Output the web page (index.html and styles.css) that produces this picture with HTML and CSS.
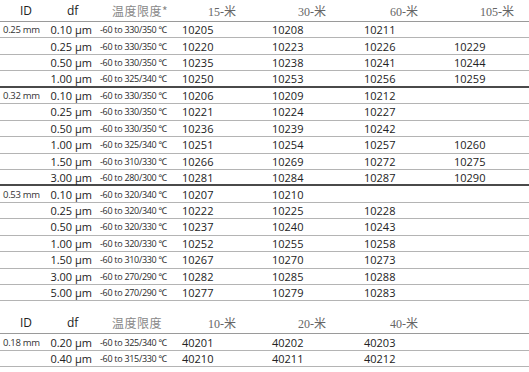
FILE: index.html
```html
<!DOCTYPE html>
<html lang="zh">
<head>
<meta charset="utf-8">
<meta name="viewport" content="width=device-width, initial-scale=1.0">
<title>色谱柱订货号</title>
<link rel="stylesheet" href="styles.css">
</head>
<body>

<!-- main table: 0.25 / 0.32 / 0.53 mm columns -->
<div class="grid">
  <div class="row head">
    <div class="id">ID</div>
    <div class="df">df</div>
    <div class="temp">温度限度*</div>
    <div class="len">15-米</div>
    <div class="len">30-米</div>
    <div class="len">60-米</div>
    <div class="len">105-米</div>
  </div>

  <div class="row">
    <div class="id">0.25 mm</div><div class="df">0.10 µm</div><div class="temp">-60 to 330/350 ℃</div>
    <div class="num">10205</div><div class="num">10208</div><div class="num">10211</div><div class="num"></div>
  </div>
  <div class="row">
    <div class="id"></div><div class="df">0.25 µm</div><div class="temp">-60 to 330/350 ℃</div>
    <div class="num">10220</div><div class="num">10223</div><div class="num">10226</div><div class="num">10229</div>
  </div>
  <div class="row">
    <div class="id"></div><div class="df">0.50 µm</div><div class="temp">-60 to 330/350 ℃</div>
    <div class="num">10235</div><div class="num">10238</div><div class="num">10241</div><div class="num">10244</div>
  </div>
  <div class="row last">
    <div class="id"></div><div class="df">1.00 µm</div><div class="temp">-60 to 325/340 ℃</div>
    <div class="num">10250</div><div class="num">10253</div><div class="num">10256</div><div class="num">10259</div>
  </div>

  <div class="row">
    <div class="id">0.32 mm</div><div class="df">0.10 µm</div><div class="temp">-60 to 330/350 ℃</div>
    <div class="num">10206</div><div class="num">10209</div><div class="num">10212</div><div class="num"></div>
  </div>
  <div class="row">
    <div class="id"></div><div class="df">0.25 µm</div><div class="temp">-60 to 330/350 ℃</div>
    <div class="num">10221</div><div class="num">10224</div><div class="num">10227</div><div class="num"></div>
  </div>
  <div class="row">
    <div class="id"></div><div class="df">0.50 µm</div><div class="temp">-60 to 330/350 ℃</div>
    <div class="num">10236</div><div class="num">10239</div><div class="num">10242</div><div class="num"></div>
  </div>
  <div class="row">
    <div class="id"></div><div class="df">1.00 µm</div><div class="temp">-60 to 325/340 ℃</div>
    <div class="num">10251</div><div class="num">10254</div><div class="num">10257</div><div class="num">10260</div>
  </div>
  <div class="row">
    <div class="id"></div><div class="df">1.50 µm</div><div class="temp">-60 to 310/330 ℃</div>
    <div class="num">10266</div><div class="num">10269</div><div class="num">10272</div><div class="num">10275</div>
  </div>
  <div class="row last">
    <div class="id"></div><div class="df">3.00 µm</div><div class="temp">-60 to 280/300 ℃</div>
    <div class="num">10281</div><div class="num">10284</div><div class="num">10287</div><div class="num">10290</div>
  </div>

  <div class="row">
    <div class="id">0.53 mm</div><div class="df">0.10 µm</div><div class="temp">-60 to 320/340 ℃</div>
    <div class="num">10207</div><div class="num">10210</div><div class="num"></div><div class="num"></div>
  </div>
  <div class="row">
    <div class="id"></div><div class="df">0.25 µm</div><div class="temp">-60 to 320/340 ℃</div>
    <div class="num">10222</div><div class="num">10225</div><div class="num">10228</div><div class="num"></div>
  </div>
  <div class="row">
    <div class="id"></div><div class="df">0.50 µm</div><div class="temp">-60 to 320/330 ℃</div>
    <div class="num">10237</div><div class="num">10240</div><div class="num">10243</div><div class="num"></div>
  </div>
  <div class="row">
    <div class="id"></div><div class="df">1.00 µm</div><div class="temp">-60 to 320/330 ℃</div>
    <div class="num">10252</div><div class="num">10255</div><div class="num">10258</div><div class="num"></div>
  </div>
  <div class="row">
    <div class="id"></div><div class="df">1.50 µm</div><div class="temp">-60 to 310/330 ℃</div>
    <div class="num">10267</div><div class="num">10270</div><div class="num">10273</div><div class="num"></div>
  </div>
  <div class="row">
    <div class="id"></div><div class="df">3.00 µm</div><div class="temp">-60 to 270/290 ℃</div>
    <div class="num">10282</div><div class="num">10285</div><div class="num">10288</div><div class="num"></div>
  </div>
  <div class="row">
    <div class="id"></div><div class="df">5.00 µm</div><div class="temp">-60 to 270/290 ℃</div>
    <div class="num">10277</div><div class="num">10279</div><div class="num">10283</div><div class="num"></div>
  </div>
</div>

<!-- narrow bore table: 0.18 mm -->
<div class="grid second">
  <div class="row head">
    <div class="id">ID</div>
    <div class="df">df</div>
    <div class="temp">温度限度</div>
    <div class="len">10-米</div>
    <div class="len">20-米</div>
    <div class="len">40-米</div>
    <div class="len"></div>
  </div>
  <div class="row">
    <div class="id">0.18 mm</div><div class="df">0.20 µm</div><div class="temp">-60 to 325/340 ℃</div>
    <div class="num">40201</div><div class="num">40202</div><div class="num">40203</div><div class="num"></div>
  </div>
  <div class="row">
    <div class="id"></div><div class="df">0.40 µm</div><div class="temp">-60 to 315/330 ℃</div>
    <div class="num">40210</div><div class="num">40211</div><div class="num">40212</div><div class="num"></div>
  </div>
</div>

</body>
</html>
```

FILE: styles.css
```css
/* product table, two blocks stacked */
body {
  margin: 0;
  background-color: #fff;
  color: #222;
  font-family: "Open Sans", "Noto Sans", sans-serif;
}

.grid {
  width: 529px;
}
.second {
  margin-top: 11px;
}

.row {
  display: grid;
  grid-template-columns: 48px 44px 90px 90px 92px 90px 75px;
  align-items: center;
  box-sizing: border-box;
  height: 16.45px;
  border-bottom: 1px solid #b4b4b4;
}
.row.last {
  border-bottom: 2px solid #4a4a4a;
}
.row.head {
  height: 22px;
  border-bottom: 1px solid #9a9a9a;
}

.id {
  font-size: 9.5px;
  letter-spacing: -0.3px;
  padding-left: 3px;
  color: #333;
  white-space: nowrap;
}
.df {
  font-size: 11px;
  text-align: right;
  white-space: nowrap;
}
.temp {
  font-size: 9px;
  letter-spacing: -0.3px;
  padding-left: 8px;
  color: #2a2a2a;
  white-space: nowrap;
}
.num {
  font-size: 11px;
  white-space: nowrap;
}

/* header cells */
.head .id {
  font-size: 12px;
  letter-spacing: 0;
  padding-left: 20px;
  color: #222;
}
.head .df {
  font-size: 12px;
  text-align: left;
  padding-left: 19px;
}
.head .temp {
  font-family: "Noto Sans CJK SC", sans-serif;
  font-size: 12px;
  letter-spacing: 0.5px;
  padding-left: 20px;
  color: #888;
}
.head .len {
  font-family: "Liberation Serif", "Noto Sans CJK SC", serif;
  font-size: 12px;
  padding-left: 26px;
  color: #666;
}
```
